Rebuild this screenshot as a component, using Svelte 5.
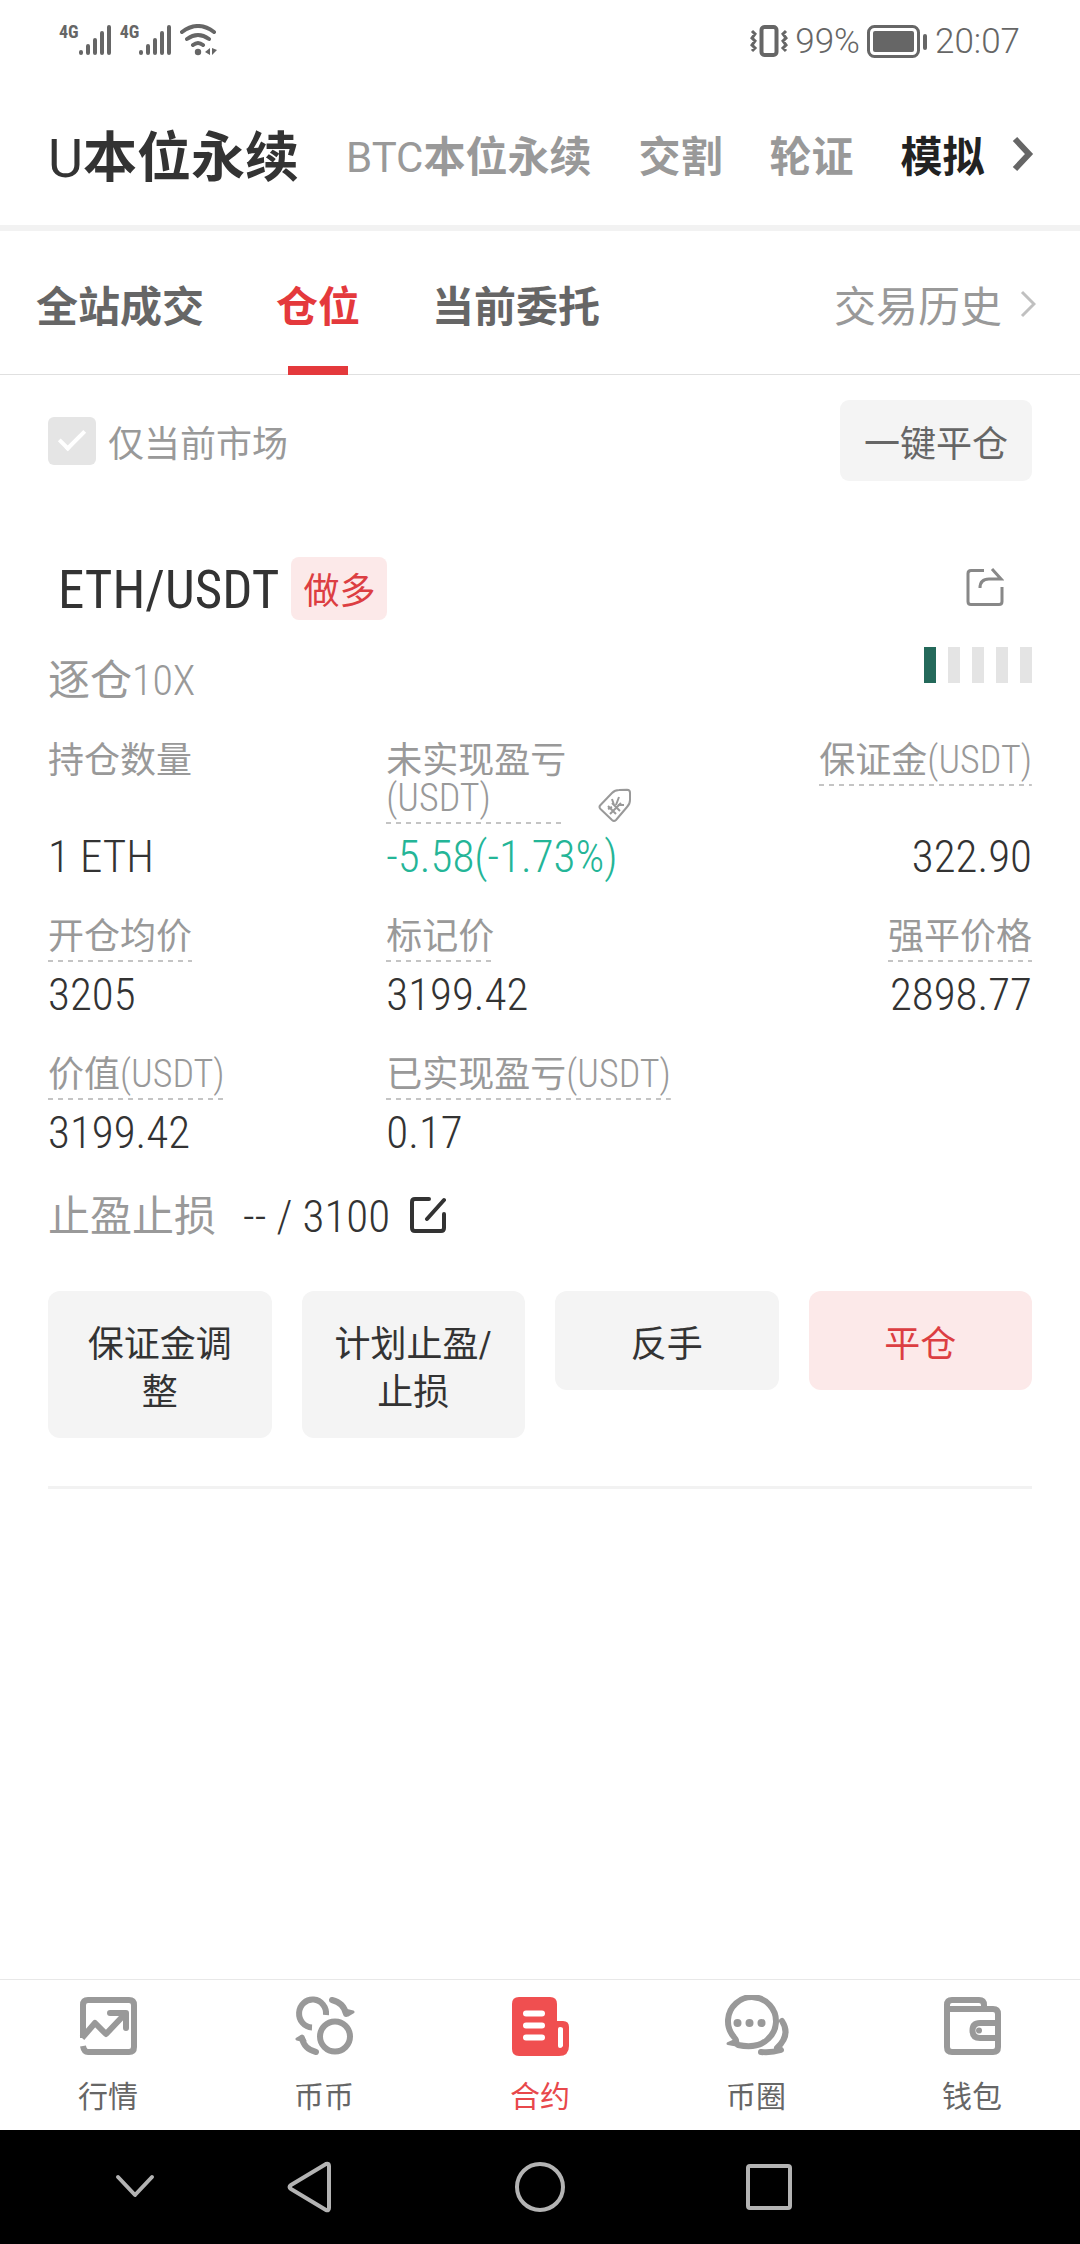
<script>
  const markets = [
    { latin: 'BTC', name: '本位永续' },
    { latin: '', name: '交割' },
    { latin: '', name: '轮证' },
    { latin: '', name: '模拟', dark: true },
  ];
  const tabs = ['全站成交', '仓位', '当前委托'];
  const metrics = [
    { label: '持仓数量', value: '1 ETH', plain: true },
    { label: '未实现盈亏', unit: '(USDT)', value: '-5.58(-1.73%)', tone: 'gain', tag: true },
    { label: '保证金', unit: '(USDT)', value: '322.90' },
    { label: '开仓均价', value: '3205' },
    { label: '标记价', value: '3199.42' },
    { label: '强平价格', value: '2898.77' },
    { label: '价值', unit: '(USDT)', value: '3199.42' },
    { label: '已实现盈亏', unit: '(USDT)', value: '0.17' },
  ];
  const actions = ['保证金调整', '计划止盈/止损', '反手', '平仓'];
  let onlyCurrent = $state(true);
</script>

{#snippet signal()}
  <div class="signal">
    <span>4G</span>
    <svg width="32" height="32" viewBox="0 0 32 32" stroke="#666" stroke-width="4" stroke-linecap="round" aria-hidden="true">
      <path d="M2 28v1M9 22v7M16 16v13M23 9v20M30 3v26" />
    </svg>
  </div>
{/snippet}

<div class="app">
  <div class="status">
    <div class="radios">
      {@render signal()}
      {@render signal()}
      <svg width="38" height="32" viewBox="0 0 38 32" fill="none" stroke="#666" stroke-width="4" stroke-linecap="round" aria-hidden="true">
        <path d="M2 8q16-12 32 0M7 15q11-8 22 0M13 21q5-4 10 0" />
        <circle cx="18" cy="28" r="3.2" fill="#666" stroke="none" />
        <path d="M30 24v7l-5-3zM32 24l5 2-2 2-3 3z" fill="#666" stroke="none" />
      </svg>
    </div>
    <div class="power">
      <svg width="38" height="32" viewBox="0 0 38 32" fill="none" stroke="#666" aria-hidden="true">
        <rect x="11.5" y="2" width="15" height="28" rx="3" stroke-width="4" />
        <path d="M2 6l3 3-3 4 3 3-3 4 3 3-3 3M36 6l-3 3 3 4-3 3 3 4-3 3 3 3" stroke-width="3" />
      </svg>
      <span>99%</span>
      <svg width="61" height="33" viewBox="0 0 61 33" aria-hidden="true">
        <rect x="1.5" y="1.5" width="50" height="30" rx="6" fill="none" stroke="#666" stroke-width="3" />
        <rect x="6" y="6" width="41" height="21" rx="2" fill="#666" />
        <rect x="56" y="9" width="4" height="16" rx="2" fill="#666" />
      </svg>
      <time>20:07</time>
    </div>
  </div>

  <header>
    <h1><span>U</span>本位永续</h1>
    <nav class="markets" aria-label="市场">
      {#each markets as m}
        <a href="#market" class:dark={m.dark}>{#if m.latin}<span>{m.latin}</span>{/if}{m.name}</a>
      {/each}
    </nav>
    <button class="more" aria-label="更多">
      <svg width="22" height="36" viewBox="0 0 22 36" fill="none" stroke="#666" stroke-width="6"><path d="M3 3l14 15L3 33" /></svg>
    </button>
  </header>

  <div class="tabs">
    <div class="tablist" role="tablist">
      {#each tabs as t, i}
        <button role="tab" aria-selected={i === 1} class:active={i === 1}>{t}</button>
      {/each}
    </div>
    <a class="history" href="#history">
      交易历史
      <svg width="16" height="28" viewBox="0 0 16 28" fill="none" stroke="#c0c0c0" stroke-width="3"><path d="M2 2l12 12L2 26" /></svg>
    </a>
  </div>

  <main>
    <div class="filter">
      <label><input type="checkbox" bind:checked={onlyCurrent} /><span>仅当前市场</span></label>
      <button class="close-all">一键平仓</button>
    </div>

    <section class="position">
      <div class="pair">
        <h2>ETH/USDT</h2>
        <span class="side">做多</span>
        <button class="share" aria-label="分享">
          <svg width="38" height="38" viewBox="0 0 38 38" fill="none" stroke="#888" stroke-width="3">
            <path d="M18 2.500H5q-3 0-3 3v28q0 3 3 3h28q3 0 3-3V19" />
            <path d="M14 20q0-9 9-9h12L26 1" />
          </svg>
        </button>
      </div>

      <div class="mode">
        <span>逐仓<span class="light">10X</span></span>
        <div class="risk" role="img" aria-label="风险 1/5">
          {#each [1, 0, 0, 0, 0] as on}<i class:on={on === 1}></i>{/each}
        </div>
      </div>

      <dl>
        {#each metrics as m}
          <div class="metric">
            <dt>
              <span class="label" class:plain={m.plain} class:narrow={m.tag}>{m.label}{#if m.unit}<wbr /><span class="unit">{m.unit}</span>{/if}</span>
              {#if m.tag}
                <svg width="34" height="36" viewBox="0 0 34 36" fill="none" stroke="#999" stroke-width="2" stroke-linejoin="round" aria-hidden="true">
                  <path d="M2.500 17L14 5q3-3 7-3l8-.3q3 0 3 3V12q0 4-3 7L18 32q-2 1.800-4 0L2.500 21q-2-2 0-4z" />
                  <path d="M14 11l2 6M21 9l-3 8M12 26l11-11M10 18l8 8M14 15l8 8M10 21l4-2M20 17l6 0" />
                </svg>
              {/if}
            </dt>
            <dd class={m.tone}>{m.value}</dd>
          </div>
        {/each}
      </dl>

      <div class="stops">
        <span class="name">止盈止损</span>
        <span class="levels">-- / 3100</span>
        <button aria-label="编辑">
          <svg width="36" height="36" viewBox="0 0 36 36" fill="none" stroke="#333" stroke-width="4" stroke-linecap="round">
            <path d="M19 2H5Q2 2 2 5v26q0 3 3 3h26q3 0 3-3V17" />
            <path d="M34 3L17 22" />
          </svg>
        </button>
      </div>

      <div class="actions">
        {#each actions as a, i}
          <button class:danger={i === 3}>{a}</button>
        {/each}
      </div>
    </section>
  </main>

  <nav class="bottom" aria-label="主导航">
    <a href="#quotes">
      <svg width="66" height="62" viewBox="0 0 66 62" fill="none" stroke="#999" stroke-width="6">
        <path d="M8 43V10q0-5 5-5h41q5 0 5 5v42q0 5-5 5H13q-4 0-5-6" />
        <path d="M7 43l13-15 11 11 18-19" stroke-linejoin="round" />
        <path d="M35 18h16v15" stroke-linecap="round" stroke-linejoin="round" />
      </svg>
      行情
    </a>
    <a href="#spot">
      <svg width="66" height="62" viewBox="0 0 66 62" fill="none" stroke="#999" stroke-width="6">
        <circle cx="44" cy="41.500" r="15" />
        <path d="M35 20A13.500 14 0 1 0 21 32.500" />
        <path d="M41 5q12 3 14 14M11 43q2 11 14 14" stroke-linecap="round" />
        <path d="M54 15l3 5 5-3zM14 46l-3-5-5 3z" fill="#999" stroke-width="3" stroke-linejoin="round" />
      </svg>
      币币
    </a>
    <a href="#contract" class="current">
      <svg width="66" height="62" viewBox="0 0 66 62" fill="#f04f50">
        <path fill-rule="evenodd" d="M12 2h31q7 0 7 7v17h6q6 0 6 6v19q0 10-10 10H12q-7 0-7-7V9q0-7 7-7zM53 32q-2 0-2 2v17q0 2 2 2t3-2V34q0-2-3-2z" />
        <path d="M19 18.500h16M19 30.500h16M19 42.500h16" stroke="#fff" stroke-width="6" stroke-linecap="round" />
      </svg>
      合约
    </a>
    <a href="#circle">
      <svg width="68" height="62" viewBox="0 0 68 62" fill="none" stroke="#999" stroke-width="6" stroke-linecap="round" stroke-linejoin="round">
        <circle cx="15.500" cy="28" r="4" fill="#999" stroke="none" />
        <circle cx="27.500" cy="28" r="4" fill="#999" stroke="none" />
        <circle cx="39.500" cy="28" r="4" fill="#999" stroke="none" />
        <path d="M14 46q0-2-2-4A24 24 0 1 1 46 44Q36 54 16 50" />
        <path d="M6 48.500l9-4 2 6z" fill="#999" stroke-width="3" />
        <path d="M60 26q9 14-5 27" />
        <path d="M39 57q10 1 20-2" />
      </svg>
      币圈
    </a>
    <a href="#wallet">
      <svg width="66" height="62" viewBox="0 0 66 62" fill="none" stroke="#999" stroke-width="6">
        <path d="M8 14v38q0 5 5 5h41q5 0 5-5V19q0-5-5-5zM8 14v-4q0-5 5-5h27q5 0 5 5v4" />
        <path d="M58 28H41q-7.500 0-7.500 7.500T41 43h17" />
        <circle cx="40" cy="35.500" r="3" fill="#999" stroke="none" />
      </svg>
      钱包
    </a>
  </nav>

  <div class="system">
    <button aria-label="收起"><svg width="40" height="26" viewBox="0 0 40 26"><path d="M3 3l17 18L37 3" /></svg></button>
    <button aria-label="返回"><svg width="46" height="54" viewBox="0 0 46 54"><path d="M40 4q3-1 3 2v42q0 3-3 2L5 29q-3-2 0-4z" /></svg></button>
    <button aria-label="主页"><svg width="54" height="54" viewBox="0 0 54 54"><circle cx="27" cy="27" r="23" /></svg></button>
    <button aria-label="最近"><svg width="48" height="48" viewBox="0 0 48 48"><rect x="3" y="3" width="42" height="42" rx="2" /></svg></button>
  </div>
</div>

<style>
  :global(body) {
    margin: 0;
    background: #fff;
  }
  .app {
    min-height: 100vh;
    display: flex;
    flex-direction: column;
    background: #fff;
    color: #333;
    font-family: 'Roboto Condensed', Roboto, 'Noto Sans CJK SC', sans-serif;
    font-size: 36px;
  }
  svg {
    display: block;
    flex: none;
  }
  button {
    font: inherit;
    color: inherit;
    border: 0;
    padding: 0;
    margin: 0;
    background: none;
    cursor: pointer;
  }
  a {
    color: inherit;
    text-decoration: none;
  }
  h1, h2, dl, dd {
    margin: 0;
  }

  .status {
    display: flex;
    justify-content: space-between;
    align-items: center;
    height: 32px;
    padding: 24px 60px 32px 59px;
    color: #666;
    font-family: Roboto, sans-serif;
    font-size: 35px;
    font-weight: 300;
  }
  .status .power {
    padding-top: 2px;
  }
  .radios, .power {
    display: flex;
    align-items: center;
    gap: 9px;
  }
  .power {
    gap: 7px;
  }
  .signal {
    display: flex;
    align-items: flex-start;
  }
  .signal span {
    font: 700 18px/16px 'Roboto Condensed', Roboto, sans-serif;
  }

  header {
    display: flex;
    align-items: center;
    gap: 47px;
    height: 131px;
    padding: 0 48px 6px;
    border-bottom: 6px solid #f2f2f2;
    font-weight: 700;
    white-space: nowrap;
  }
  h1 {
    font-size: 54px;
    font-weight: 700;
  }
  h1 span, .markets span {
    font-family: Roboto, sans-serif;
    font-weight: 400;
  }
  .markets {
    display: flex;
    flex: 1;
    gap: 47px;
    font-size: 42px;
    color: #999;
  }
  .markets .dark {
    color: #222;
  }
  .more {
    margin-left: -20px;
  }

  .tabs {
    display: flex;
    justify-content: space-between;
    height: 143px;
    padding: 0 44px 0 36px;
    border-bottom: 1px solid #e0e0e0;
    font-size: 42px;
  }
  .tablist {
    display: flex;
    gap: 72px;
    color: #666;
  }
  .tablist button {
    position: relative;
    font-weight: 700;
    padding-top: 2px;
  }
  .tablist .active {
    color: #e4393c;
  }
  .active::after {
    content: '';
    position: absolute;
    left: 50%;
    bottom: -1px;
    width: 60px;
    height: 9px;
    margin-left: -30px;
    background: #e4393c;
  }
  .history {
    display: flex;
    align-items: center;
    gap: 18px;
    padding-top: 2px;
    color: #999;
  }

  main {
    flex: 1;
    padding: 25px 48px 0;
  }
  .filter {
    display: flex;
    align-items: center;
    justify-content: space-between;
  }
  .filter label {
    display: flex;
    align-items: center;
    gap: 12px;
    color: #999;
  }
  input {
    appearance: none;
    width: 48px;
    height: 48px;
    margin: 0;
    border-radius: 6px;
    background: #e5e5e5;
    display: grid;
    place-items: center;
  }
  input:checked::after {
    content: '';
    width: 22px;
    height: 10px;
    margin-bottom: 8px;
    border: solid #fff;
    border-width: 0 0 4px 4px;
    transform: rotate(-45deg);
  }
  .close-all {
    height: 81px;
    padding: 0 24px;
    border-radius: 9px;
    background: #f4f4f4;
    color: #666;
  }

  .position {
    padding: 76px 0 48px;
    border-bottom: 3px solid #f2f2f2;
  }
  .pair {
    display: flex;
    align-items: center;
    padding: 0 28px 0 10px;
  }
  h2 {
    padding-top: 4px;
    font-size: 53px;
    font-weight: 400;
    line-height: 59px;
  }
  .side {
    margin-left: 12px;
    padding: 7px 12px 0;
    border-radius: 8px;
    background: #fce9e9;
    color: #dc3e42;
    line-height: 56px;
  }
  .share {
    margin-left: auto;
    padding-bottom: 4px;
  }
  .mode {
    display: flex;
    justify-content: space-between;
    align-items: flex-start;
    margin-top: 27px;
    color: #999;
    font-size: 42px;
    line-height: 68px;
  }
  .light {
    font-weight: 300;
  }
  .risk {
    display: flex;
    gap: 12px;
  }
  .risk i {
    width: 12px;
    height: 36px;
    background: #e4e4e4;
  }
  .risk .on {
    background: #24695a;
  }

  dl {
    display: grid;
    grid-template-columns: 11fr 11fr 10fr;
    row-gap: 37px;
    margin-top: 27px;
  }
  .metric {
    display: flex;
    flex-direction: column;
    justify-content: space-between;
    gap: 8px;
  }
  .metric:nth-child(3n) {
    align-items: flex-end;
  }
  dt {
    display: flex;
    align-items: flex-end;
    gap: 32px;
    color: #999;
    line-height: 38px;
    white-space: nowrap;
  }
  .label {
    padding-bottom: 6px;
    background: repeating-linear-gradient(90deg, #c4c4c4 0 5px, transparent 5px 10px) bottom / 100% 2px no-repeat;
  }
  .plain {
    background: none;
  }
  .narrow {
    width: 180px;
    white-space: normal;
  }
  .unit {
    font-size: 38px;
    font-weight: 300;
    line-height: 36px;
  }
  dd {
    font-size: 45px;
    font-weight: 300;
    line-height: 49px;
  }
  .gain {
    color: #24b597;
  }

  .stops {
    display: flex;
    align-items: center;
    margin-top: 30px;
    font-size: 42px;
    line-height: 60px;
  }
  .name {
    margin-right: 27px;
    color: #999;
  }
  .levels {
    font-size: 45px;
    font-weight: 300;
  }
  .stops button {
    margin-left: 20px;
    padding-bottom: 4px;
  }

  .actions {
    display: grid;
    grid-template-columns: repeat(4, 1fr);
    align-items: start;
    gap: 30px;
    margin-top: 44px;
  }
  .actions button {
    padding: 30px 24px 21px;
    border-radius: 12px;
    background: #f4f4f4;
    line-height: 48px;
  }
  .actions .danger {
    background: #fce9e9;
    color: #dc3e42;
  }

  .bottom {
    display: grid;
    grid-template-columns: repeat(5, 1fr);
    height: 150px;
    border-top: 1px solid #e8e8e8;
    color: #666;
    font-size: 30px;
  }
  .bottom a {
    display: flex;
    flex-direction: column;
    align-items: center;
    gap: 15px;
    padding-top: 15px;
  }
  .bottom .current {
    color: #e8484b;
  }

  .system {
    display: grid;
    grid-template-columns: 174fr 174fr 288fr 170fr 226fr;
    height: 114px;
    padding-left: 48px;
    background: #000;
  }
  .system button {
    display: grid;
    place-items: center;
  }
  .system svg {
    fill: none;
    stroke: #b3b3b3;
    stroke-width: 4;
    stroke-linecap: round;
    stroke-linejoin: round;
  }
</style>
